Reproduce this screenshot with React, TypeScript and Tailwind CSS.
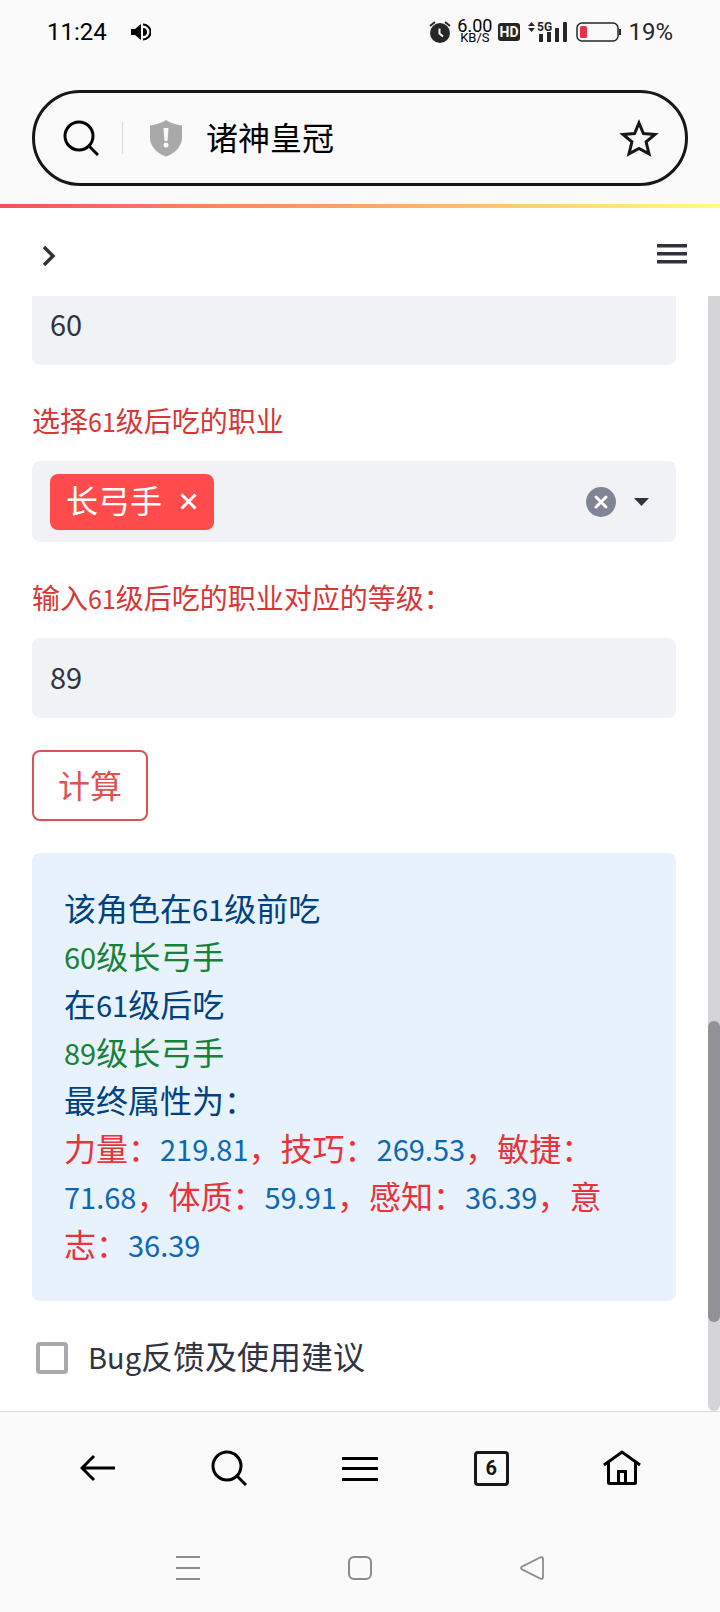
import { useState } from "react";
import type { ReactNode } from "react";

const stats = [
  { name: "力量", value: "219.81" },
  { name: "技巧", value: "269.53" },
  { name: "敏捷", value: "71.68" },
  { name: "体质", value: "59.91" },
  { name: "感知", value: "36.39" },
  { name: "意志", value: "36.39" },
];

// Latin glyphs are set a little smaller than the Chinese text around them
function Latin({ children }: { children: ReactNode }) {
  return <span className="text-[29px] leading-none">{children}</span>;
}

function LatinSmall({ children }: { children: ReactNode }) {
  return <span className="text-[25px] leading-none">{children}</span>;
}

function SearchIcon() {
  return (
    <svg width="36" height="36" viewBox="0 0 36 36" fill="none" stroke="currentColor" strokeWidth="3">
      <circle cx="16" cy="16" r="14" />
      <path d="M26 26l9 9" />
    </svg>
  );
}

function StatusBar() {
  return (
    <div className="flex h-16 items-center pr-[47px] pl-[47px] font-['Roboto',sans-serif] text-[#262626]">
      <span className="text-2xl text-black">11:24</span>
      <svg className="ml-6" width="20" height="18" viewBox="0 0 20 18" fill="none">
        <path d="M0 6h4l6-5v16l-6-5H0z" fill="#000" />
        <path d="M12 5a4 4 0 0 1 0 8z" fill="#000" />
        <path d="M12 1.500a7.200 7.200 0 0 1 0 15" stroke="#000" strokeWidth="2" />
      </svg>

      <div className="ml-auto flex items-center">
        <svg width="22" height="24" viewBox="0 0 22 24" fill="none">
          <circle cx="11" cy="13" r="10" fill="currentColor" />
          <path d="M1 6l5-4M21 6l-5-4" stroke="currentColor" strokeWidth="2" />
          <path d="M10.500 8.500v5l3.500 3" stroke="#fafafa" strokeWidth="2" />
        </svg>
        <span className="ml-1.5 flex flex-col items-center text-black">
          <span className="text-[18px] leading-3">6.00</span>
          <span className="text-[13px] leading-3">KB/S</span>
        </span>
        <svg className="ml-1.5" width="22" height="20" viewBox="0 0 22 20">
          <rect y="1" width="22" height="18" rx="3" fill="currentColor" />
          <text x="11" y="15" fontSize="14" fontWeight="700" fill="#fafafa" textAnchor="middle">
            HD
          </text>
        </svg>
        <svg className="ml-2" width="40" height="24" viewBox="0 0 40 24" fill="currentColor">
          <path d="M3.500 2L7 6H0zM3.500 12L7 8H0z" />
          <text x="9" y="11" fontSize="12" fontWeight="700">
            5G
          </text>
          <rect x="11" y="14" width="4" height="8" />
          <rect x="19" y="12" width="4" height="10" />
          <rect x="27" y="8" width="4" height="14" />
          <rect x="35" y="2" width="4" height="20" rx="1" />
        </svg>
        <svg className="ml-2" width="46" height="20" viewBox="0 0 46 20" fill="none">
          <rect x="1" y="1" width="41" height="18" rx="5" stroke="currentColor" strokeWidth="1.500" />
          <rect x="4" y="4" width="7" height="12" rx="1.500" fill="#e8314a" />
          <path d="M44 7v6" stroke="currentColor" strokeWidth="2" />
        </svg>
        <span className="ml-1.5 text-2xl">19%</span>
      </div>
    </div>
  );
}

function AddressBar() {
  return (
    <div className="px-8 pt-[26px] pb-[18px]">
      <div className="flex h-24 items-center rounded-full border-3 border-[#171717] pr-[26px] pl-7 text-black">
        <button type="button" aria-label="搜索">
          <SearchIcon />
        </button>
        <span className="ml-[23px] h-8 w-px bg-[#d9d9d9]" />
        <svg className="ml-[26px]" width="34" height="38" viewBox="0 0 34 38">
          <path
            d="M17 1c4 3 10 4.500 16 5.500V19c0 8-7 15.500-16 18.500C8 34.500 1 27 1 19V6.500C7 5.500 13 4 17 1z"
            fill="#a9a9a9"
          />
          <path d="M14.500 9h5l-1 13h-3z" fill="#fafafa" />
          <circle cx="17" cy="26" r="2.500" fill="#fafafa" />
        </svg>
        <span className="ml-[23px] flex-1 pb-1 text-[32px] leading-10">诸神皇冠</span>
        <button type="button" aria-label="收藏">
          <svg width="40" height="40" viewBox="0 0 40 40" fill="none" stroke="#171717" strokeWidth="3">
            <path d="M20 5l4.400 10.500 11.600.9-8.900 7.500 2.900 12L20 30.500 10 35.900l2.900-12L4 16.400l11.600-.9z" />
          </svg>
        </button>
      </div>
    </div>
  );
}

function AppHeader() {
  return (
    <header className="flex h-[88px] items-center justify-between bg-white px-8 text-[#31333f]">
      <button type="button" aria-label="展开侧栏">
        <svg width="32" height="32" viewBox="0 0 32 32" fill="none" stroke="currentColor" strokeWidth="3.500">
          <path d="M12 11l9 9-9 9" />
        </svg>
      </button>
      <button type="button" aria-label="菜单">
        <svg width="31" height="24" viewBox="0 0 31 24" fill="currentColor">
          <path d="M0 4h30v3.500H0zM0 12h30v3.500H0zM0 20h30v3.500H0z" />
        </svg>
      </button>
    </header>
  );
}

function BrowserToolbar() {
  return (
    <nav className="grid h-28 grid-cols-5 place-items-center px-8 text-black">
      <button type="button" aria-label="后退">
        <svg width="36" height="28" viewBox="0 0 36 28" fill="none" stroke="currentColor" strokeWidth="3">
          <path d="M35 14H2M14 2L2 14l12 12" />
        </svg>
      </button>
      <button type="button" aria-label="搜索">
        <SearchIcon />
      </button>
      <button type="button" aria-label="菜单">
        <svg width="36" height="26" viewBox="0 0 36 26" fill="currentColor">
          <path d="M0 2h36v3H0zM0 12h36v3H0zM0 23h36v3H0z" />
        </svg>
      </button>
      <button
        type="button"
        aria-label="标签页"
        className="flex size-[35px] items-center justify-center rounded-sm border-3 border-[#171717] font-['Roboto',sans-serif] text-xl font-bold text-[#171717]"
      >
        6
      </button>
      <button type="button" aria-label="主页">
        <svg width="38" height="36" viewBox="0 0 38 36" fill="none" stroke="currentColor" strokeWidth="3">
          <path d="M1 15L19 2l18 13" />
          <path d="M5.500 12v20.500q0 1 1 1h25q1 0 1-1V12" />
          <path d="M15.500 33V21.500h7V33" />
        </svg>
      </button>
    </nav>
  );
}

function SystemNav() {
  return (
    <nav className="grid h-[88px] grid-cols-3 place-items-center px-[102px] text-[#8c8c8c]">
      <button type="button" aria-label="最近任务">
        <svg width="24" height="24" viewBox="0 0 24 24" fill="currentColor">
          <path d="M0 0h24v2H0zM0 11h24v2H0zM0 22h24v2H0z" />
        </svg>
      </button>
      <button type="button" aria-label="桌面">
        <svg width="24" height="24" viewBox="0 0 24 24" fill="none" stroke="currentColor" strokeWidth="2">
          <rect x="1" y="1" width="22" height="22" rx="5" />
        </svg>
      </button>
      <button type="button" aria-label="返回">
        <svg width="24" height="24" viewBox="0 0 24 24" fill="none" stroke="currentColor" strokeWidth="1.800">
          <path d="M2 10.600L20.500 1.300q2.500-1 2.500 1.700v18q0 2.700-2.500 1.700L2 13.400q-2-1.400 0-2.800z" />
        </svg>
      </button>
    </nav>
  );
}

export default function App() {
  const [levelBefore, setLevelBefore] = useState("60");
  const [levelAfter, setLevelAfter] = useState("89");
  const [feedback, setFeedback] = useState(false);

  return (
    <div className="flex min-h-screen flex-col bg-[#fafafa] font-['Noto_Sans_CJK_SC',sans-serif]">
      <StatusBar />
      <AddressBar />
      <div className="h-1 bg-linear-to-r from-[#f4505a] via-[#faa56c] to-[#fffd80]" />
      <AppHeader />

      <div className="flex flex-1 overflow-hidden border-b border-[#d9d9d9] bg-white">
        <main className="min-w-0 flex-1 px-8 pb-[29px]">
          <input
            aria-label="等级"
            value={levelBefore}
            onChange={(event) => setLevelBefore(event.target.value)}
            className="-mt-[11px] block h-20 w-full rounded-lg bg-[#f0f2f6] px-[18px] pb-1 text-[29px] text-[#31333f] outline-none"
          />

          <label htmlFor="job" className="mt-8 mb-[18px] block text-[28px] leading-[46px] text-[#d93636]">
            选择<LatinSmall>61</LatinSmall>级后吃的职业
          </label>
          <div className="flex h-[81px] items-center rounded-lg bg-[#f0f2f6] px-[18px]">
            <span className="flex h-14 items-center rounded-lg bg-[#ff4b4b] pr-[17px] pl-4 text-[32px] leading-12 text-white">
              <span className="pb-1.5">长弓手</span>
              <button type="button" aria-label="移除长弓手" className="ml-[18px]">
                <svg width="17" height="17" viewBox="0 0 17 17" stroke="currentColor" strokeWidth="3">
                  <path d="M1.500 1.500l14 14M15.500 1.500l-14 14" />
                </svg>
              </button>
            </span>
            <input id="job" className="min-w-0 flex-1 bg-transparent outline-none" />
            <button type="button" aria-label="清空">
              <svg width="30" height="30" viewBox="0 0 30 30">
                <circle cx="15" cy="15" r="15" fill="#808495" />
                <path d="M10 10l10 10M20 10L10 20" stroke="#fff" strokeWidth="3" strokeLinecap="round" />
              </svg>
            </button>
            <button type="button" aria-label="展开选项" className="mr-[9px] ml-[18px]">
              <svg width="15" height="9" viewBox="0 0 15 9">
                <path d="M0 1h15L7.500 9z" fill="#31333f" />
              </svg>
            </button>
          </div>

          <label htmlFor="level" className="mt-8 mb-[18px] block text-[28px] leading-[46px] text-[#d93636]">
            输入<LatinSmall>61</LatinSmall>级后吃的职业对应的等级：
          </label>
          <input
            id="level"
            value={levelAfter}
            onChange={(event) => setLevelAfter(event.target.value)}
            className="block h-20 w-full rounded-lg bg-[#f0f2f6] px-[18px] pb-1 text-[29px] text-[#31333f] outline-none"
          />

          <button
            type="button"
            className="mt-8 block h-[71px] rounded-lg border-2 border-[#e05252] px-6 pb-1 text-[32px] leading-12 text-[#e05252]"
          >
            计算
          </button>

          <section className="mt-8 rounded-lg bg-[#e8f2fc] px-8 pt-[30px] pb-[34px] text-[32px] leading-12 text-[#004280]">
            <p>
              该角色在<Latin>61</Latin>级前吃
            </p>
            <p className="text-[#158237]">
              <Latin>60</Latin>级长弓手
            </p>
            <p>
              在<Latin>61</Latin>级后吃
            </p>
            <p className="text-[#158237]">
              <Latin>89</Latin>级长弓手
            </p>
            <p>最终属性为：</p>
            <p className="text-[#e8333a]">
              {stats.map((stat, index) => (
                <span key={stat.name}>
                  {`${index > 0 ? "，" : ""}${stat.name}：`}
                  <span className="text-[29px] leading-none text-[#0b68b5]">{stat.value}</span>
                </span>
              ))}
            </p>
          </section>

          <label className="mt-8 flex items-center pl-1 text-[32px] leading-11 text-[#31333f]">
            <input
              type="checkbox"
              checked={feedback}
              onChange={(event) => setFeedback(event.target.checked)}
              className="mt-0.5 mr-5 size-8 appearance-none rounded-sm border-4 border-[#a9a9ad] checked:bg-[#ff4b4b]"
            />
            <span className="pb-1">
              <Latin>Bug</Latin>反馈及使用建议
            </span>
          </label>
        </main>

        {/* page scrollbar */}
        <div className="relative w-3 rounded-b-full bg-[#d5d5d7]">
          <div className="absolute inset-x-0 top-[65%] h-[27%] rounded-full bg-[#929298]" />
        </div>
      </div>

      <BrowserToolbar />
      <SystemNav />
    </div>
  );
}
